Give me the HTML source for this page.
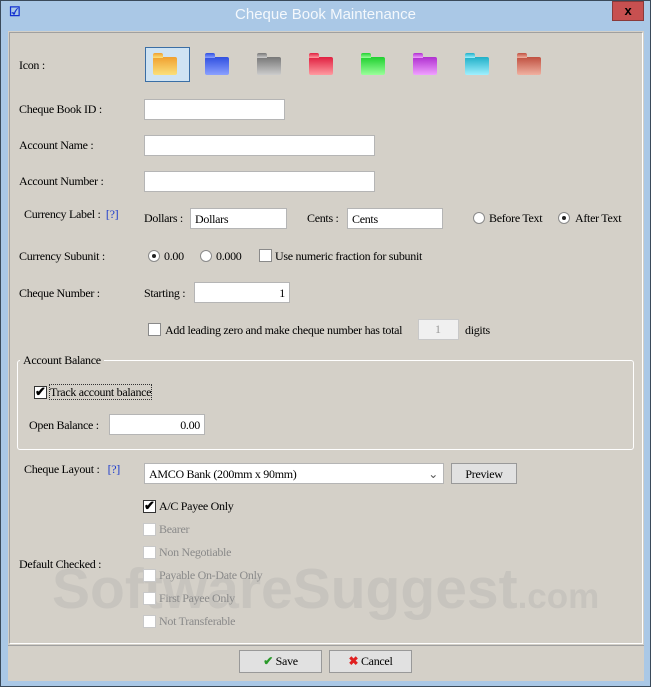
<!DOCTYPE html><html><head><style>
*{margin:0;padding:0;box-sizing:border-box}
body{width:651px;height:687px;background:#aac8e6;position:relative;overflow:hidden;font-family:"Liberation Serif",serif;font-size:12px;color:#000;letter-spacing:-0.3px}
.a{position:absolute;white-space:nowrap}
.t{line-height:14px}
.in{position:absolute;background:#fff;border:1px solid #b5b5b5;height:21px;padding:3px 4px;line-height:14px}
.cb{position:absolute;width:13px;height:13px;background:#fff;border:1px solid #8a8a8a}
.cb.d{border-color:#c8c8c8}
.rb{position:absolute;width:12px;height:12px;border-radius:50%;background:#fff;border:1px solid #8a8a8a}
.rb.on::after{content:"";position:absolute;left:3px;top:3px;width:4px;height:4px;border-radius:50%;background:#222}
.g{color:#8a8a8a}
.h{color:#1a3acc}
.btn{position:absolute;background:#e1e1e1;border:1px solid #999;text-align:center;line-height:20px}
.fd{position:absolute;width:24px;height:18px;border-radius:2px}
.fd::before{content:"";position:absolute;left:0;top:-4px;width:10px;height:5px;border-radius:2px 2px 0 0;background:inherit}
</style></head><body>
<div class="a" style="left:0;top:0;width:651px;height:687px;border:1px solid #3a4a5a"></div>
<div class="a" style="left:9px;top:4px;width:16px;height:14px;font-size:13px;color:#1230d0;font-weight:bold">☑</div>
<div class="a" style="left:0;top:6px;width:651px;text-align:center;font-family:'Liberation Sans',sans-serif;font-size:15px;color:#f4f8fc;letter-spacing:0">Cheque Book Maintenance</div>
<div class="a" style="left:612px;top:1px;width:32px;height:20px;background:#c75050;border:1px solid #8a3a3a;color:#000;text-align:center;font:bold 13px 'Liberation Sans',sans-serif;line-height:18px">x</div>
<div class="a" style="left:8px;top:31px;width:636px;height:650px;background:#d4d0c8"></div>
<div class="a" style="left:9px;top:32px;width:634px;height:612px;border:1px solid #a0a0a0;border-right-color:#fff;border-bottom-color:#fff"></div>
<div class="a" style="left:8px;top:645px;width:636px;height:1px;background:#a0a0a0"></div>

<div class="a" style="left:52px;top:556px;font:bold 57px 'Liberation Sans',sans-serif;color:rgba(150,150,150,0.2);letter-spacing:0">SoftwareSuggest<span style="font-size:35px">.com</span></div>

<div class="a t" style="left:19px;top:58px">Icon :</div>
<div class="a" style="left:145px;top:47px;width:45px;height:35px;background:#cfe3f3;border:1px solid #3a6ea5"></div>
<div class="fd" style="left:153px;top:57px;background:linear-gradient(#f0a030,#fbe07a)"></div>
<div class="fd" style="left:205px;top:57px;background:linear-gradient(#3050e0,#8aa0ff)"></div>
<div class="fd" style="left:257px;top:57px;background:linear-gradient(#777,#ccc)"></div>
<div class="fd" style="left:309px;top:57px;background:linear-gradient(#e02040,#ff9aa0)"></div>
<div class="fd" style="left:361px;top:57px;background:linear-gradient(#20d030,#9aff9a)"></div>
<div class="fd" style="left:413px;top:57px;background:linear-gradient(#b030d0,#f0a0ff)"></div>
<div class="fd" style="left:465px;top:57px;background:linear-gradient(#20b0c8,#a0f0ff)"></div>
<div class="fd" style="left:517px;top:57px;background:linear-gradient(#c05040,#f0b0a0)"></div>

<div class="a t" style="left:19px;top:102px">Cheque Book ID :</div>
<div class="in" style="left:144px;top:99px;width:141px"></div>
<div class="a t" style="left:19px;top:138px">Account Name :</div>
<div class="in" style="left:144px;top:135px;width:231px"></div>
<div class="a t" style="left:19px;top:174px">Account Number :</div>
<div class="in" style="left:144px;top:171px;width:231px"></div>

<div class="a t" style="left:24px;top:207px">Currency Label : <span class="h">&nbsp;[?]</span></div>
<div class="a t" style="left:144px;top:211px">Dollars :</div>
<div class="in" style="left:190px;top:208px;width:97px">Dollars</div>
<div class="a t" style="left:307px;top:211px">Cents :</div>
<div class="in" style="left:347px;top:208px;width:96px">Cents</div>
<div class="rb" style="left:473px;top:212px"></div><div class="a t" style="left:489px;top:211px">Before Text</div>
<div class="rb on" style="left:558px;top:212px"></div><div class="a t" style="left:575px;top:211px">After Text</div>

<div class="a t" style="left:19px;top:249px">Currency Subunit :</div>
<div class="rb on" style="left:148px;top:250px"></div><div class="a t" style="left:164px;top:249px">0.00</div>
<div class="rb" style="left:200px;top:250px"></div><div class="a t" style="left:216px;top:249px">0.000</div>
<div class="cb" style="left:259px;top:249px"></div><div class="a t" style="left:275px;top:249px">Use numeric fraction for subunit</div>

<div class="a t" style="left:19px;top:286px">Cheque Number :</div>
<div class="a t" style="left:144px;top:286px">Starting :</div>
<div class="in" style="left:194px;top:282px;width:96px;text-align:right">1</div>

<div class="cb" style="left:148px;top:323px"></div>
<div class="a t" style="left:165px;top:323px">Add leading zero and make cheque number has total</div>
<div class="a" style="left:418px;top:319px;width:41px;height:21px;background:#f0f0f0;border:1px solid #c8c8c8;color:#999;line-height:19px;padding-left:16px">1</div>
<div class="a t" style="left:465px;top:323px">digits</div>

<div class="a" style="left:17px;top:360px;width:617px;height:90px;border:1px solid #fff;border-radius:3px"></div>
<div class="a t" style="left:20px;top:353px;background:#d4d0c8;padding:0 3px">Account Balance</div>
<div class="cb" style="left:34px;top:386px;border-color:#333"><span style="position:absolute;left:0px;top:-3px;font-size:13px;font-weight:bold">✔</span></div>
<div class="a t" style="left:50px;top:385px;outline:1px dotted #333">Track account balance</div>
<div class="a t" style="left:29px;top:418px">Open Balance :</div>
<div class="in" style="left:109px;top:414px;width:96px;text-align:right">0.00</div>

<div class="a t" style="left:24px;top:462px">Cheque Layout : <span class="h">&nbsp;&nbsp;[?]</span></div>
<div class="in" style="left:144px;top:463px;width:300px;height:21px">AMCO Bank (200mm x 90mm)<span style="position:absolute;right:5px;top:3px;color:#555">⌄</span></div>
<div class="btn" style="left:451px;top:463px;width:66px;height:21px">Preview</div>

<div class="cb" style="left:143px;top:500px;border-color:#333"><span style="position:absolute;left:0;top:-3px;font-size:13px;font-weight:bold">✔</span></div>
<div class="a t" style="left:159px;top:499px">A/C Payee Only</div>
<div class="cb d" style="left:143px;top:523px"></div><div class="a t g" style="left:159px;top:522px">Bearer</div>
<div class="cb d" style="left:143px;top:546px"></div><div class="a t g" style="left:159px;top:545px">Non Negotiable</div>
<div class="cb d" style="left:143px;top:569px"></div><div class="a t g" style="left:159px;top:568px">Payable On-Date Only</div>
<div class="cb d" style="left:143px;top:592px"></div><div class="a t g" style="left:159px;top:591px">First Payee Only</div>
<div class="cb d" style="left:143px;top:615px"></div><div class="a t g" style="left:159px;top:614px">Not Transferable</div>
<div class="a t" style="left:19px;top:557px">Default Checked :</div>

<div class="btn" style="left:239px;top:650px;width:83px;height:23px"><span style="color:#2a9a2a;font-weight:bold">✔</span> Save</div>
<div class="btn" style="left:329px;top:650px;width:83px;height:23px"><span style="color:#e02020;font-weight:bold">✖</span> Cancel</div>
</body></html>
